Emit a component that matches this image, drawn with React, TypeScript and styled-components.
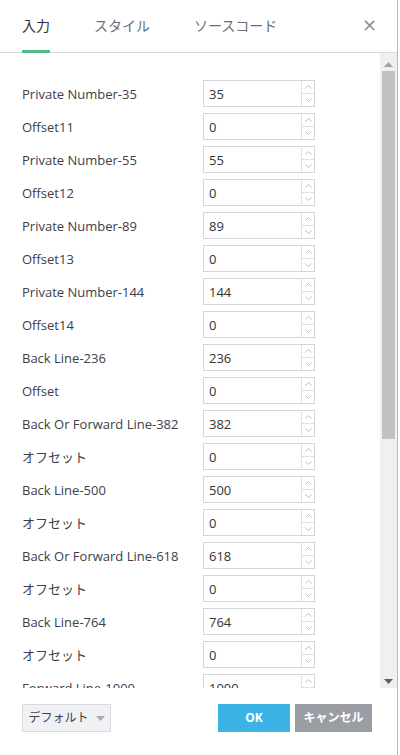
import React from "react";
import styled, { createGlobalStyle } from "styled-components";

const rows: [string, string][] = [
  ["Private Number-35", "35"],
  ["Offset11", "0"],
  ["Private Number-55", "55"],
  ["Offset12", "0"],
  ["Private Number-89", "89"],
  ["Offset13", "0"],
  ["Private Number-144", "144"],
  ["Offset14", "0"],
  ["Back Line-236", "236"],
  ["Offset", "0"],
  ["Back Or Forward Line-382", "382"],
  ["オフセット", "0"],
  ["Back Line-500", "500"],
  ["オフセット", "0"],
  ["Back Or Forward Line-618", "618"],
  ["オフセット", "0"],
  ["Back Line-764", "764"],
  ["オフセット", "0"],
  ["Forward Line-1000", "1000"],
  ["オフセット", "0"],
];

const Global = createGlobalStyle`
  html, body {
    margin: 0;
    padding: 0;
    background: #fff;
  }
  body {
    font-family: "Open Sans", "Noto Sans CJK JP", sans-serif;
  }
`;

const Page = styled.div`
  width: 400px;
  height: 755px;
  display: flex;
  background: #fff;
`;

const Dialog = styled.div`
  width: 397px;
  height: 755px;
  border-right: 1px solid #b8b8b8;
  display: flex;
  flex-direction: column;
  background: #fff;
`;

const Header = styled.div`
  height: 52px;
  display: flex;
  align-items: stretch;
  border-bottom: 1px solid #dadada;
  padding-left: 22px;
  position: relative;
`;

const Tab = styled.div<{ $active?: boolean }>`
  margin-right: 44px;
  display: flex;
  align-items: center;
  padding-bottom: 3px;
  font-size: 14px;
  color: ${({ $active }) => ($active ? "#2f3238" : "#6b6f78")};
  position: relative;

  &::after {
    content: "";
    display: ${({ $active }) => ($active ? "block" : "none")};
    position: absolute;
    left: 0;
    right: 0;
    bottom: -1px;
    height: 3px;
    background: #53b987;
  }
`;

const Close = styled.div`
  position: absolute;
  right: 20px;
  top: 14px;
  font-size: 18px;
  color: #8a8d93;
  font-family: "DejaVu Sans", sans-serif;
`;

const Body = styled.div`
  height: 635px;
  display: flex;
  overflow: hidden;
`;

const List = styled.div`
  flex: 1;
  padding: 24px 0 0 22px;
  display: flex;
  flex-direction: column;
`;

const Row = styled.div`
  height: 33px;
  flex-shrink: 0;
  display: flex;
  align-items: center;
`;

const Label = styled.div`
  width: 181px;
  font-size: 13px;
  color: #3d4047;
  white-space: nowrap;
`;

const Field = styled.div`
  width: 110px;
  height: 25px;
  border: 1px solid #d4d6da;
  display: flex;
  background: #fff;
`;

const Value = styled.div`
  flex: 1;
  padding-left: 5px;
  display: flex;
  align-items: center;
  font-size: 13px;
  color: #333;
`;

const Spin = styled.div`
  width: 12px;
  border-left: 1px solid #dfe1e4;
  display: flex;
  flex-direction: column;
`;

const SpinBtn = styled.div<{ $down?: boolean }>`
  flex: 1;
  display: flex;
  align-items: center;
  justify-content: center;
  border-top: ${({ $down }) => ($down ? "1px solid #dfe1e4" : "none")};
`;

const Scrollbar = styled.div`
  width: 17px;
  background: #f0f0f0;
  display: flex;
  flex-direction: column;
  align-items: center;
  padding-top: 4px;
`;

const Arrow = styled.div`
  height: 14px;
  display: flex;
  align-items: center;
  justify-content: center;
`;

const Thumb = styled.div`
  width: 13px;
  height: 368px;
  background: #c1c1c1;
`;

const Spacer = styled.div`
  flex: 1;
`;

const Footer = styled.div`
  flex: 1;
  display: flex;
  align-items: flex-start;
  padding: 16px 0 0 22px;
`;

const DefaultBtn = styled.div`
  width: 87px;
  height: 26px;
  border: 1px solid #d8dadf;
  background: #f0f1f5;
  display: flex;
  align-items: center;
  justify-content: center;
  gap: 7px;
  font-size: 12px;
  line-height: 16px;
  color: #3d4047;
  white-space: nowrap;
`;

const Btn = styled.div<{ $color: string; $w: number }>`
  width: ${({ $w }) => $w}px;
  height: 28px;
  background: ${({ $color }) => $color};
  color: #fff;
  font-weight: 700;
  font-size: 12px;
  display: flex;
  align-items: center;
  justify-content: center;
  margin-left: 5px;
  padding-bottom: 2px;
  box-sizing: border-box;
`;

const Chevron = ({ down }: { down?: boolean }) => (
  <svg width="7" height="4" viewBox="0 0 7 4">
    <path
      d={down ? "M0.5 0.5 L3.5 3.5 L6.5 0.5" : "M0.5 3.5 L3.5 0.5 L6.5 3.5"}
      fill="none"
      stroke="#b9bcc2"
      strokeWidth="1"
    />
  </svg>
);

const Tri = ({ down, color = "#606060" }: { down?: boolean; color?: string }) => (
  <svg width="9" height="5" viewBox="0 0 9 5">
    <path d={down ? "M0 0 L9 0 L4.5 5 Z" : "M0 5 L9 5 L4.5 0 Z"} fill={color} />
  </svg>
);

export default function App() {
  return (
    <Page>
      <Global />
      <Dialog>
        <Header>
          <Tab $active>入力</Tab>
          <Tab>スタイル</Tab>
          <Tab>ソースコード</Tab>
          <Close>×</Close>
        </Header>
        <Body>
          <List>
            {rows.map(([label, value], i) => (
              <Row key={i}>
                <Label>{label}</Label>
                <Field>
                  <Value>{value}</Value>
                  <Spin>
                    <SpinBtn>
                      <Chevron />
                    </SpinBtn>
                    <SpinBtn $down>
                      <Chevron down />
                    </SpinBtn>
                  </Spin>
                </Field>
              </Row>
            ))}
          </List>
          <Scrollbar>
            <Arrow>
              <Tri color="#a3a3a3" />
            </Arrow>
            <Thumb />
            <Spacer />
            <Arrow>
              <Tri down />
            </Arrow>
          </Scrollbar>
        </Body>
        <Footer>
          <DefaultBtn>
            <span>デフォルト</span>
            <Tri down color="#a8abb2" />
          </DefaultBtn>
          <Spacer />
          <Btn $color="#3bb3e4" $w={72}>OK</Btn>
          <Btn $color="#9b9da4" $w={77} style={{ marginRight: 25 }}>
            キャンセル
          </Btn>
        </Footer>
      </Dialog>
    </Page>
  );
}
